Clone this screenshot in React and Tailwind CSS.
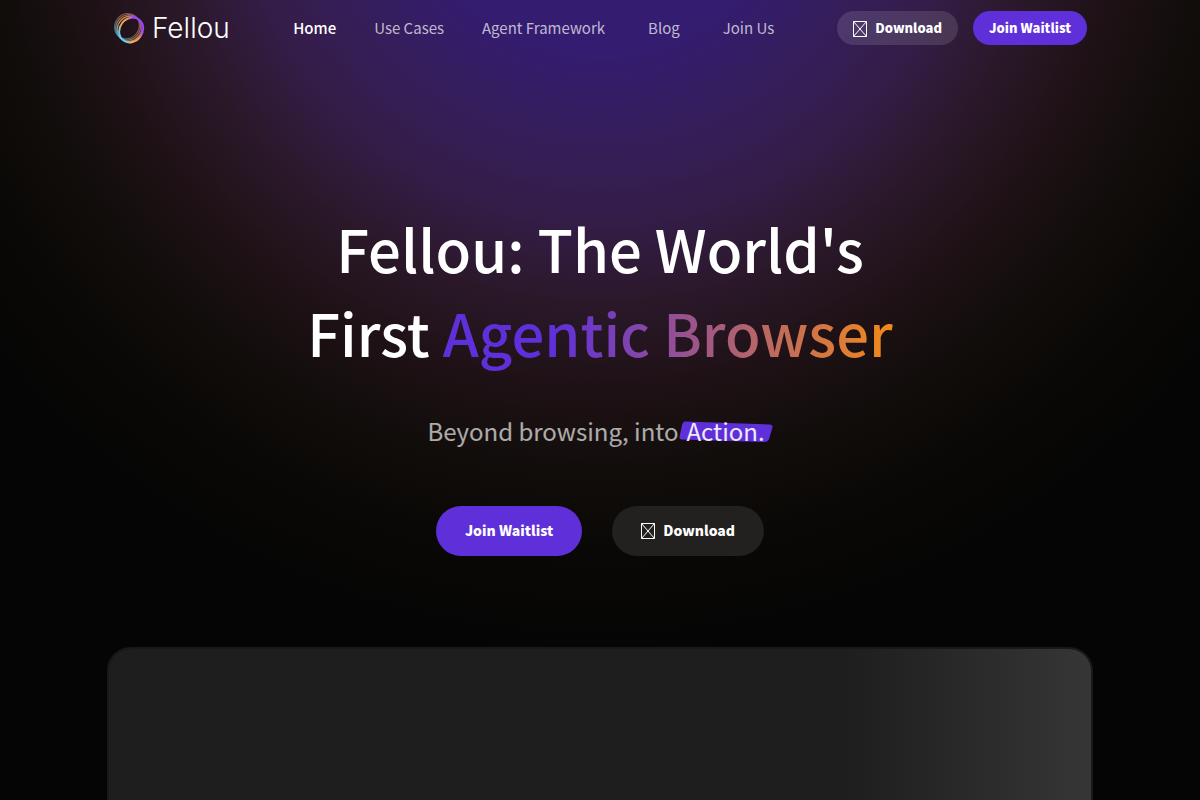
import React from "react";

const navItems = [
  { label: "Home", active: true, gap: "" },
  { label: "Use Cases", gap: "ml-[38px]" },
  { label: "Agent Framework", gap: "ml-[38px]" },
  { label: "Blog", gap: "ml-[43px]" },
  { label: "Join Us", gap: "ml-[43px]" },
];

function Rings() {
  return (
    <svg viewBox="0 0 32 32" className="size-8" fill="none" aria-hidden="true">
      <defs>
        <linearGradient id="ring-back" x1="0.6" y1="0" x2="0.4" y2="1">
          <stop offset="0" stopColor="#a0607a" />
          <stop offset="0.45" stopColor="#96683f" />
          <stop offset="1" stopColor="#3f8fa8" />
        </linearGradient>
        <linearGradient id="ring-mid" x1="0.7" y1="0" x2="0.3" y2="1">
          <stop offset="0.1" stopColor="#9440d8" />
          <stop offset="0.4" stopColor="#cf8a45" />
          <stop offset="0.75" stopColor="#c98545" />
          <stop offset="1" stopColor="#5a9ac8" />
        </linearGradient>
        <linearGradient id="ring-front" x1="0.65" y1="0" x2="0.35" y2="1">
          <stop offset="0.15" stopColor="#9b45ff" />
          <stop offset="0.45" stopColor="#f2a05a" />
          <stop offset="0.72" stopColor="#f5b052" />
          <stop offset="0.95" stopColor="#63d0f5" />
        </linearGradient>
      </defs>
      <ellipse cx="14" cy="14.2" rx="12" ry="13" transform="rotate(38 14 14.2)" stroke="url(#ring-back)" strokeWidth="1.3" opacity="0.75" />
      <ellipse cx="15.2" cy="15.4" rx="12" ry="13" transform="rotate(38 15.2 15.4)" stroke="url(#ring-back)" strokeWidth="1.3" />
      <ellipse cx="16.6" cy="16.8" rx="12" ry="13" transform="rotate(38 16.6 16.8)" stroke="url(#ring-mid)" strokeWidth="1.5" />
      <ellipse cx="18.2" cy="18" rx="11.4" ry="13" transform="rotate(38 18.2 18)" stroke="url(#ring-front)" strokeWidth="1.9" />
    </svg>
  );
}

function BoxIcon() {
  return (
    <svg viewBox="0 0 14 16" className="mt-px h-4 w-[14px] shrink-0" fill="none" stroke="currentColor" aria-hidden="true">
      <path d="M.5.5h13v15H.5z" />
      <path d="M.5.5l13 15M13.5.5l-13 15" />
    </svg>
  );
}

export default function App() {
  return (
    <div className="min-h-screen overflow-hidden bg-[#050505] bg-[radial-gradient(circle_at_50%_-140px,#341c70_0px,#341c70_190px,#351e58_290px,#341d48_360px,#2a1829_445px,#1e1115_530px,#110d0b_612px,#0a0806_690px,#050505_790px)] font-['Noto_Sans_CJK_SC',sans-serif] text-white">
      <header className="mx-auto flex h-14 w-full max-w-[974px] items-center">
        <a href="#home" className="flex items-center gap-[7px]">
          <Rings />
          <span className="font-['Inter',sans-serif] text-[28px] leading-8 font-light">Fellou</span>
        </a>
        <nav className="ml-auto mr-[63px] flex items-center text-[15px] leading-6 whitespace-nowrap">
          {navItems.map((item) => (
            <a
              key={item.label}
              href="#"
              className={`${item.gap} ${item.active ? "font-medium text-white" : "text-white/70"}`}
            >
              {item.label}
            </a>
          ))}
        </nav>
        <div className="flex items-center gap-[15px] text-[13px] leading-5 font-black whitespace-nowrap">
          <button type="button" className="flex h-[34px] items-center gap-2 rounded-full bg-white/12 px-4">
            <BoxIcon />
            Download
          </button>
          <button type="button" className="h-[34px] rounded-full bg-[#5f30d9] px-4">
            Join Waitlist
          </button>
        </div>
      </header>

      <main className="flex flex-col items-center px-6 pt-[150px]">
        <h1 className="text-center text-[58px] leading-[84px] font-medium">
          Fellou: The World's
          <br />
          First{" "}
          <span className="bg-[linear-gradient(90deg,#5f30d9_25%,#f28a1a_100%)] bg-clip-text text-transparent">
            Agentic Browser
          </span>
        </h1>
        <p className="mt-[39px] flex items-center text-2xl leading-9 text-white/65">
          Beyond browsing, into
          <span className="relative isolate px-2 text-white/90">
            <svg
              viewBox="0 0 93 22"
              preserveAspectRatio="none"
              className="absolute inset-x-0 top-2 -z-10 h-[22px] w-full"
              aria-hidden="true"
            >
              <path d="M6 .5 90 3.5Q93 4 92.500 6L89 18Q88 21 84 21L2 18.500Q0 18 .5 16L3 4Q4 .5 6 .5Z" fill="#5f30d9" />
            </svg>
            Action.
          </span>
        </p>
        <div className="mt-[57px] flex gap-[30px] text-sm leading-6 font-black whitespace-nowrap">
          <button type="button" className="h-[50px] rounded-full bg-[#5f30d9] px-[29px] pb-0.5">
            Join Waitlist
          </button>
          <button type="button" className="flex h-[50px] items-center gap-2 rounded-full bg-[#222120] px-[29px] pb-0.5">
            <BoxIcon />
            Download
          </button>
        </div>
        <section
          aria-label="Product preview"
          className="mt-[91px] h-[560px] w-full max-w-[986px] rounded-3xl border-2 border-[#191919] bg-[#111]"
        >
          <div className="size-full rounded-[22px] bg-linear-to-r from-[#1e1e1e] from-75% to-[#363636]" />
        </section>
      </main>
    </div>
  );
}
